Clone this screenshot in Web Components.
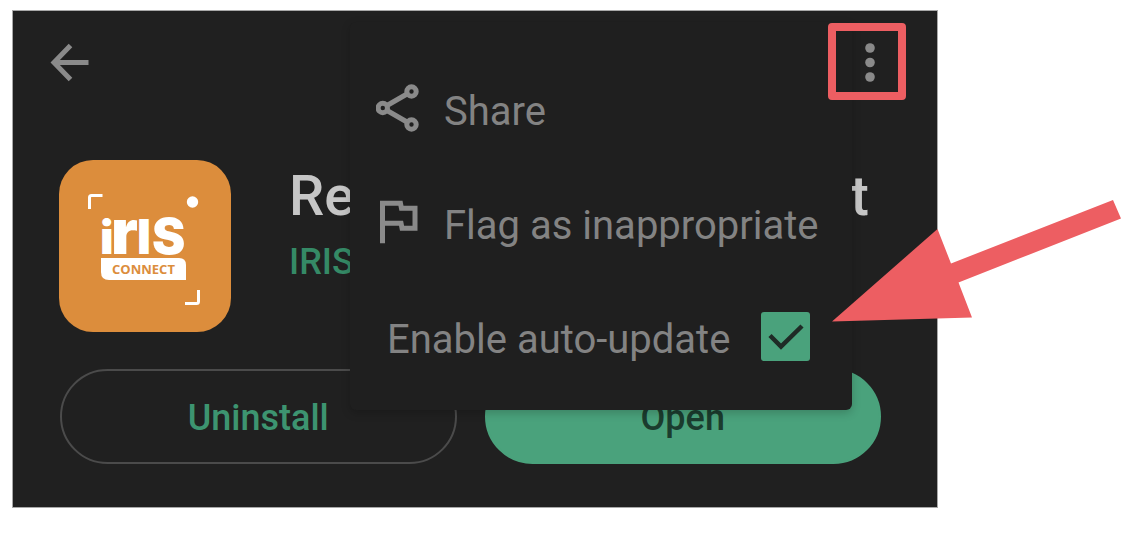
<!DOCTYPE html>
<html lang="en">
<head>
<meta charset="utf-8">
<meta name="viewport" content="width=device-width, initial-scale=1">
<title>IRIS Connect app listing</title>
<style>
  body { margin: 0; background: #fff; font-family: Roboto, "Noto Sans", sans-serif; }
</style>
</head>
<body>
<store-page></store-page>

<script>
const define = (name, html) => {
  const template = document.createElement('template');
  template.innerHTML = html;
  customElements.define(name, class extends HTMLElement {
    constructor() {
      super();
      this.attachShadow({ mode: 'open' }).append(template.content.cloneNode(true));
    }
  });
};

define('tool-bar', `
  <style>
    :host { display: flex; justify-content: space-between; align-items: center; padding: 0 31px 0 37px; }
    button { display: block; margin: 0; padding: 0; border: 0; background: none; color: #8a8a8a; }
    .more { position: relative; z-index: 2; box-sizing: border-box; width: 78px; height: 77px;
            border: 8px solid #ed5e62; border-radius: 4px; }
    svg { display: block; }
  </style>
  <button type="button" aria-label="Back">
    <svg width="40" height="40" viewBox="0 0 40 40" fill="none" stroke="currentColor" stroke-width="5">
      <path d="M38.500 20.500H4M20.500 3.500 4 20.500l16.500 17"/>
    </svg>
  </button>
  <button type="button" class="more" aria-label="More options">
    <svg width="62" height="61" viewBox="0 0 62 61" fill="currentColor">
      <circle cx="34" cy="17" r="4.800"/><circle cx="34" cy="31.500" r="4.800"/><circle cx="34" cy="46" r="4.800"/>
    </svg>
  </button>`);

define('app-logo', `
  <style>
    :host { display: block; width: 172px; height: 172px; border-radius: 34px; background: #dc8d3c; flex: none; }
    svg { display: block; }
    .word { font-family: Inter, "Liberation Sans", sans-serif; font-weight: 900; }
    .sub { font-family: "Open Sans", sans-serif; font-weight: 700; font-size: 13px; }
  </style>
  <svg width="172" height="172" viewBox="0 0 172 172">
    <g fill="none" stroke="#fff" stroke-width="3">
      <path d="M30.500 49V37.500q0-2 2-2H43.500"/>
      <path d="M126 143.500h11.500q2 0 2-2V130"/>
    </g>
    <circle cx="133.500" cy="42" r="5.700" fill="#fff"/>
    <text class="word" y="94" fill="#fff"><tspan x="41" font-size="46">i</tspan><tspan x="52" font-size="62">r</tspan><tspan x="78" font-size="48">I</tspan><tspan x="93" font-size="50">S</tspan></text>
    <path d="M42 98h78q7 0 7 7v15H50q-8 0-8-8z" fill="#fff"/>
    <text class="sub" x="84.500" y="114" text-anchor="middle" fill="#dc8d3c">CONNECT</text>
  </svg>`);

define('app-heading', `
  <style>
    :host { display: flex; gap: 58px; padding: 0 68px 0 46px; }
    .info { flex: 1; padding-top: 4px; }
    h1 { display: flex; justify-content: space-between; margin: 0; font-size: 56px; line-height: 64px;
         font-weight: 500; color: #c6c6c6; }
    a { display: block; margin-top: 10px; font-size: 36px; line-height: 48px; font-weight: 500;
        color: #358a66; text-decoration: none; }
  </style>
  <app-logo></app-logo>
  <div class="info">
    <h1><span>Re</span><span>t</span></h1>
    <a href="#developer">IRIS</a>
  </div>`);

define('pill-button', `
  <style>
    :host { display: block; flex: 1; }
    button { display: block; box-sizing: border-box; width: 100%; height: 95px; margin: 0; padding: 2px 0 0;
             border: 2px solid #4b4b4b; border-radius: 48px; background: none; color: #3d9470;
             font: 500 36px/48px Roboto, "Noto Sans", sans-serif; }
    :host([primary]) button { border-color: #4aa27c; background: #4aa27c; color: #1b3c2e; }
  </style>
  <button type="button"><slot></slot></button>`);

define('menu-item', `
  <style>
    :host { display: block; }
    button { display: flex; align-items: center; gap: 24px; box-sizing: border-box; width: 100%; height: 114px;
             margin: 0; padding: 0 26px; border: 0; background: none; color: #838383; text-align: left;
             font: 400 40px/48px Roboto, "Noto Sans", sans-serif; white-space: nowrap; }
    .label { padding-top: 8px; }
  </style>
  <button type="button" role="menuitem"><slot name="icon"></slot><span class="label"><slot></slot></span></button>`);

define('menu-check', `
  <style>
    :host { display: block; }
    label { display: flex; justify-content: space-between; align-items: center; height: 114px;
            padding: 0 42px 0 37px; color: #838383; font-size: 40px; line-height: 48px; white-space: nowrap; }
    .label { padding-top: 8px; }
    .box { display: grid; }
    .box > * { grid-area: 1 / 1; }
    input { appearance: none; width: 49px; height: 49px; margin: 0; border-radius: 3px; background: #4aa27c; }
    svg { pointer-events: none; visibility: hidden; }
    input:checked + svg { visibility: visible; }
  </style>
  <label>
    <span class="label"><slot></slot></span>
    <span class="box">
      <input type="checkbox" checked>
      <svg width="49" height="49" viewBox="0 0 49 49" fill="none" stroke="#1f2b26" stroke-width="4.500">
        <path d="M9 23.500 20 34.500 41 14"/>
      </svg>
    </span>
  </label>`);

define('overflow-menu', `
  <style>
    :host { display: block; box-sizing: border-box; width: 502px; padding: 29px 0 17px; border-radius: 6px;
            background: #1f1f1f; box-shadow: 0 3px 10px rgba(0, 0, 0, .2); }
    svg { display: block; flex: none; color: #8a8a8a; }
  </style>
  <menu-item>
    <svg slot="icon" width="44" height="48" viewBox="0 0 44 48" fill="none" stroke="currentColor" stroke-width="5">
      <circle cx="6.800" cy="24" r="4.700"/><circle cx="35.500" cy="7.500" r="4.700"/><circle cx="35.500" cy="40.500" r="4.700"/>
      <path d="M11 21.500 31 10M11 26.500 31 38"/>
    </svg>Share</menu-item>
  <menu-item>
    <svg slot="icon" width="44" height="44" viewBox="3.400 3.700 17.600 17.600" fill="currentColor">
      <path d="M12.360 6l.4 2H18v6h-3.360l-.4-2H7V6h5.360M14 4H5v17h2v-7h5.600l.4 2h7V6h-5.600L14 4z"/>
    </svg>Flag as inappropriate</menu-item>
  <menu-check>Enable auto-update</menu-check>`);

define('pointer-arrow', `
  <style>
    :host { display: block; pointer-events: none; }
    svg { display: block; }
  </style>
  <svg width="292" height="126" viewBox="830 198 292 126" fill="#ed5e62" aria-hidden="true">
    <path d="M832 321.500 937.500 229 951 263.500 1113 200 1121 218.500 958.500 282.500 972 317.500z"/>
  </svg>`);

define('store-page', `
  <style>
    :host { display: block; padding: 10px 202px 33px 12px; }
    main { position: relative; box-sizing: border-box; padding: 12px 0 43px; border: 1px solid #a8a8a8; background: #202020; }
    app-heading { margin-top: 60px; }
    .actions { display: flex; gap: 28px; margin-top: 37px; padding: 0 56px 0 47px; }
    overflow-menu { position: absolute; z-index: 1; top: 11px; right: 85px; }
    pointer-arrow { position: absolute; z-index: 3; top: 187px; right: -185px; }
  </style>
  <main>
    <tool-bar></tool-bar>
    <app-heading></app-heading>
    <div class="actions">
      <pill-button>Uninstall</pill-button>
      <pill-button primary>Open</pill-button>
    </div>
    <overflow-menu role="menu"></overflow-menu>
    <pointer-arrow></pointer-arrow>
  </main>`);
</script>
</body>
</html>
